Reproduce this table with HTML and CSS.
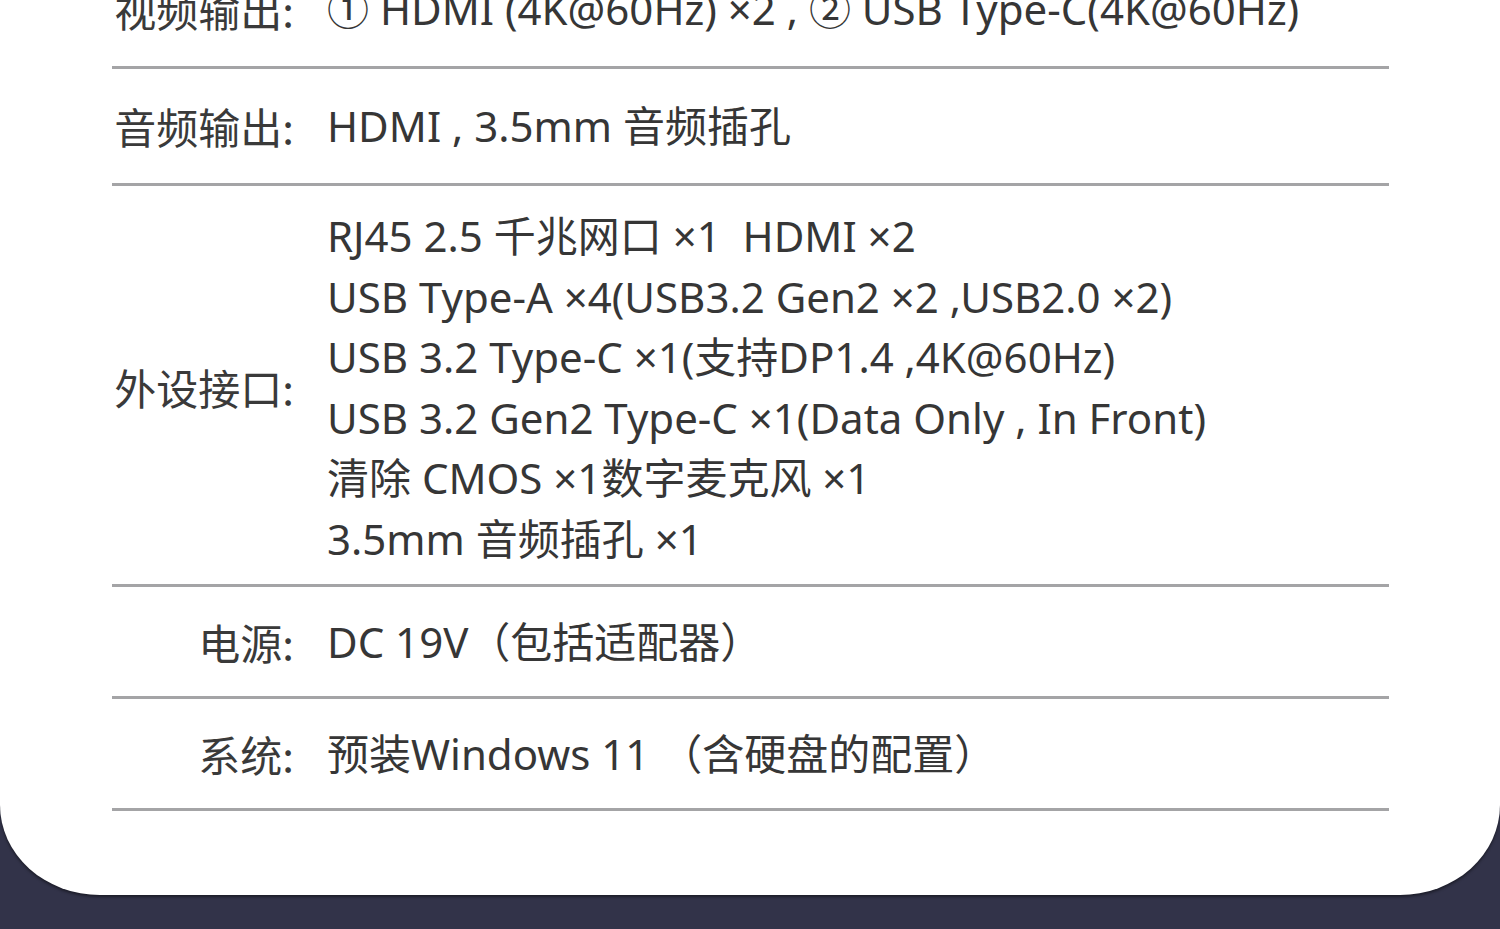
FILE: index.html
```html
<!DOCTYPE html>
<html lang="zh-CN">
<head>
    <meta charset="UTF-8">
    <meta name="viewport" content="width=device-width, initial-scale=1.0">
    <title>产品参数</title>
    <link rel="stylesheet" href="styles.css">
</head>
<body>

    <div class="card">
        <div class="fila">
            <div class="etiqueta">视频输出:</div>
            <div class="valor">① HDMI (4K@60Hz) ×2 , ② USB Type-C(4K@60Hz)</div>
        </div>
        <div class="fila">
            <div class="etiqueta">音频输出:</div>
            <div class="valor">HDMI , 3.5mm 音频插孔</div>
        </div>
        <div class="fila multi">
            <div class="etiqueta">外设接口:</div>
            <div class="valor">
                RJ45 2.5 千兆网口 ×1&nbsp; HDMI ×2<br>
                USB Type-A ×4(USB3.2 Gen2 ×2 ,USB2.0 ×2)<br>
                USB 3.2 Type-C ×1(支持DP1.4 ,4K@60Hz)<br>
                USB 3.2 Gen2 Type-C ×1(Data Only , In Front)<br>
                清除 CMOS ×1数字麦克风 ×1<br>
                3.5mm 音频插孔 ×1
            </div>
        </div>
        <div class="fila corta">
            <div class="etiqueta">电源:</div>
            <div class="valor">DC 19V（包括适配器）</div>
        </div>
        <div class="fila corta">
            <div class="etiqueta">系统:</div>
            <div class="valor">预装Windows 11 （含硬盘的配置）</div>
        </div>
    </div>

</body>
</html>
```

FILE: styles.css
```css
body {
    margin: 0;
    height: 100vh;
    overflow: hidden;
    background-color: #323349;
    font-family: "Noto Sans", "Noto Sans CJK SC", sans-serif;
    color: #363636;
}
.card {
    margin-top: -48px; /* la primera fila queda cortada arriba */
    padding: 0 111px 84px 112px;
    background-color: #fff;
    border-radius: 0 0 100px 100px / 0 0 90px 90px;
    box-shadow: 0 2px 3px rgba(0, 0, 0, 0.45);
}
.fila {
    display: grid;
    grid-template-columns: 182px 1fr;
    column-gap: 33px;
    align-items: center;
    padding: 27px 0;
    border-bottom: 3px solid #a4a4a6;
    font-size: 42px;
    line-height: 60px;
}
.fila.multi {
    padding: 20px 0 14px;
    line-height: 60.6px;
}
.fila.corta {
    padding: 25px 0 24px;
}
.etiqueta {
    text-align: right;
    white-space: nowrap;
    color: #3a3a3a;
    font-family: "Noto Sans CJK SC", sans-serif;
}
.valor {
    white-space: nowrap;
}
```
